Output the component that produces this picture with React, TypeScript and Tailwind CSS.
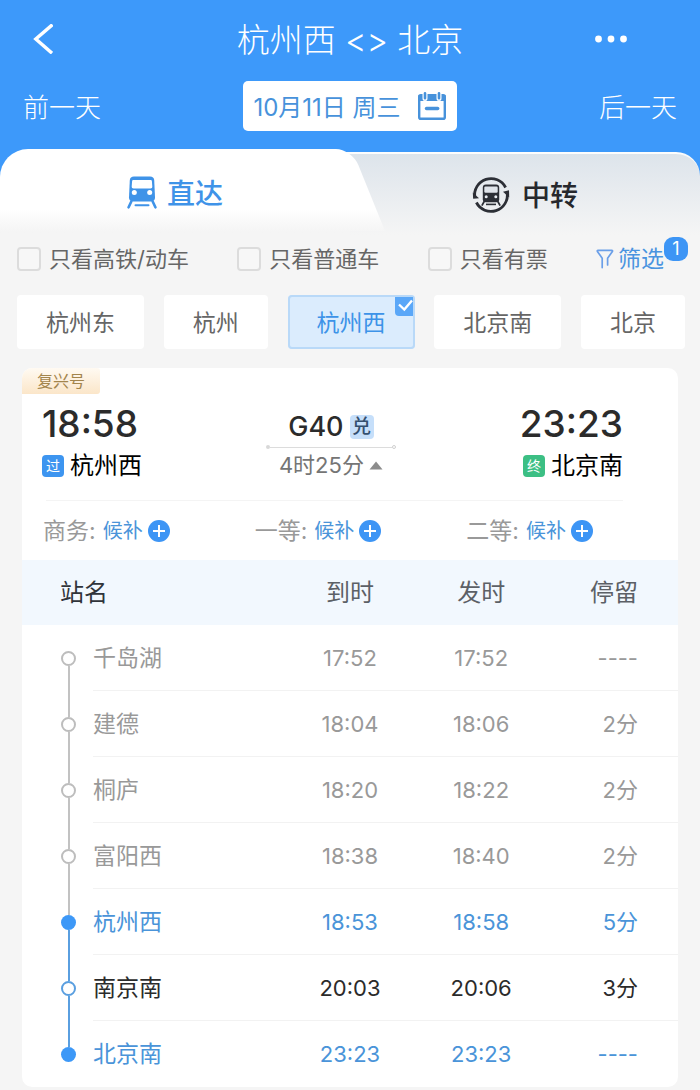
import { useState } from "react";

type Stop = {
  name: string;
  arrive: string;
  depart: string;
  stay: string;
  state: "past" | "active" | "next";
};

const stops: Stop[] = [
  { name: "千岛湖", arrive: "17:52", depart: "17:52", stay: "----", state: "past" },
  { name: "建德", arrive: "18:04", depart: "18:06", stay: "2分", state: "past" },
  { name: "桐庐", arrive: "18:20", depart: "18:22", stay: "2分", state: "past" },
  { name: "富阳西", arrive: "18:38", depart: "18:40", stay: "2分", state: "past" },
  { name: "杭州西", arrive: "18:53", depart: "18:58", stay: "5分", state: "active" },
  { name: "南京南", arrive: "20:03", depart: "20:06", stay: "3分", state: "next" },
  { name: "北京南", arrive: "23:23", depart: "23:23", stay: "----", state: "active" },
];

const rowText = {
  past: "text-[#999999]",
  active: "text-[#4a94d9]",
  next: "text-[#2b2b2b]",
};

const dotStyle = {
  past: "border-2 border-[#bdbdbd] bg-white",
  active: "bg-[#3d98f7]",
  next: "border-2 border-[#5a9fe0] bg-white",
};

const filters = ["只看高铁/动车", "只看普通车", "只看有票"];
const stations = ["杭州东", "杭州", "杭州西", "北京南", "北京"];
const seats = ["商务", "一等", "二等"];

function BackIcon() {
  return (
    <svg width="20" height="30" viewBox="0 0 20 30" fill="none" stroke="#fff" strokeWidth="3.4" aria-hidden="true">
      <path d="M19.5 0.600 L2.8 15 L19 29.200" />
    </svg>
  );
}

function MoreIcon() {
  return (
    <svg width="34" height="10" viewBox="0 0 34 10" fill="#fff" aria-hidden="true">
      <circle cx="4.5" cy="5" r="3.4" />
      <circle cx="17" cy="5" r="3.4" />
      <circle cx="29.5" cy="5" r="3.4" />
    </svg>
  );
}

function CalendarIcon() {
  return (
    <svg width="30" height="30" viewBox="0 0 30 30" fill="none" aria-hidden="true">
      <rect x="2.2" y="4.2" width="25.6" height="23.6" rx="1.6" stroke="#4792db" strokeWidth="2.4" />
      <path d="M1.5 4h27v6h-27z" fill="#4792db" />
      <path d="M8 2.4v5.2M22 2.4v5.2" stroke="#fff" strokeWidth="5" strokeLinecap="round" />
      <path d="M8 2.2v5M22 2.2v5" stroke="#4792db" strokeWidth="2.6" strokeLinecap="round" />
      <path d="M9.5 17.5h11.200" stroke="#4792db" strokeWidth="3.4" strokeLinecap="round" />
    </svg>
  );
}

function TrainIcon() {
  return (
    <svg width="30" height="34" viewBox="0 0 30 34" fill="none" aria-hidden="true">
      <path
        d="M7 1.5h16c2.6 0 4 1.3 4.2 3.6l.8 17.2c.1 2.6-1.200 4.200-3.800 4.200H5.800C3.200 26.500 1.900 24.900 2 22.300L2.800 5.100C3 2.800 4.400 1.500 7 1.500z"
        fill="#3f93e8"
      />
      <path d="M6.500 5h17c.9 0 1.300.4 1.400 1.300l.4 5.200c.1 1.300-.6 2-1.900 2H6.600c-1.300 0-2-.7-1.900-2l.4-5.200C5.200 5.400 5.600 5 6.500 5z" fill="#fff" />
      <circle cx="7.300" cy="17.500" r="2.500" fill="#fff" />
      <circle cx="22.700" cy="17.500" r="2.500" fill="#fff" />
      <path d="M4.300 26.500 L1.600 32.300 M25.700 26.500 L28.400 32.300" stroke="#3f93e8" strokeWidth="2.600" strokeLinecap="round" />
      <path d="M8.500 30.300h13" stroke="#3f93e8" strokeWidth="2" strokeLinecap="round" />
    </svg>
  );
}

function TransferIcon() {
  return (
    <svg width="38" height="38" viewBox="0 0 38 38" fill="none" aria-hidden="true">
      <path d="M2.800 21.500 A16.400 16.400 0 0 1 33.600 11.500" stroke="#2c2f36" strokeWidth="2.800" />
      <path d="M4.400 26.500 A16.400 16.400 0 0 0 35.200 16.500" stroke="#2c2f36" strokeWidth="2.800" />
      <path d="M.8 16.500 L7 22.300 L1.200 22.800z" fill="#2c2f36" />
      <path d="M37.200 21.500 L31 15.700 L37 14.200z" fill="#2c2f36" />
      <rect x="10.800" y="8.600" width="16.400" height="17.600" rx="3" fill="#2c2f36" />
      <rect x="12.300" y="10.600" width="13.400" height="6.200" rx="1.200" fill="#dfe4ea" />
      <circle cx="14.200" cy="20.800" r="1.500" fill="#e9edf2" />
      <circle cx="23.800" cy="20.800" r="1.500" fill="#e9edf2" />
      <path d="M12.200 25.500 L10.200 29 M25.800 25.500 L27.800 29" stroke="#2c2f36" strokeWidth="1.700" strokeLinecap="round" />
      <path d="M14 28.400h10" stroke="#2c2f36" strokeWidth="1.600" />
    </svg>
  );
}

function FunnelIcon() {
  return (
    <svg width="18" height="20" viewBox="0 0 18 20" fill="none" stroke="#6b9fe8" strokeWidth="1.700" strokeLinejoin="round" strokeLinecap="round" aria-hidden="true">
      <path d="M6.200 18.600 V9.200 L1.400 2.400 C1.100 1.800 1.300 1.300 2 1.300 H15.800 C16.500 1.300 16.700 1.800 16.400 2.400 L11.600 9.200 V16" />
    </svg>
  );
}

function PlusIcon() {
  return (
    <svg width="22" height="22" viewBox="0 0 22 22" aria-hidden="true">
      <circle cx="11" cy="11" r="11" fill="#3d95f5" />
      <path d="M11 5v12M5 11h12" stroke="#fff" strokeWidth="2" />
    </svg>
  );
}

export default function App() {
  const [station, setStation] = useState("杭州西");

  return (
    <div className="min-h-screen bg-[#f5f5f5] pb-[3px] font-['Inter','Noto_Sans_CJK_SC',sans-serif] text-[#2b2b2b]">
      <header className="bg-[#3d99fa] text-white">
        <div className="grid h-[78px] grid-cols-[110px_1fr_110px] items-center">
          <button type="button" aria-label="返回" className="justify-self-start pl-[33px]">
            <BackIcon />
          </button>
          <h1 className="pt-[2px] text-center text-[33px] leading-10 font-light">杭州西 &lt;&gt; 北京</h1>
          <button type="button" aria-label="更多" className="justify-self-start pl-1">
            <MoreIcon />
          </button>
        </div>
        <div className="grid grid-cols-[1fr_auto_1fr] items-center px-[23px] pt-[3px] pb-[18px]">
          <button type="button" className="justify-self-start pt-[3px] text-[26px] leading-8 font-light">前一天</button>
          <button type="button" className="flex h-[50px] items-center gap-4 rounded-[5px] bg-white px-[10px] text-[24px] leading-8 whitespace-nowrap text-[#4792db]">
            <span className="pt-[3px]">10月11日 周三</span>
            <CalendarIcon />
          </button>
          <button type="button" className="justify-self-end pt-[3px] text-[26px] leading-8 font-light">后一天</button>
        </div>
      </header>

      <div className="bg-linear-to-b from-[#3d99fa] from-40% to-[#f5f5f5] to-40%">
        <div role="tablist" className="isolate grid h-[86px] grid-cols-2">
          <button
            type="button"
            role="tab"
            aria-selected="true"
            className="relative z-10 flex items-center justify-center gap-[10px] rounded-tl-[28px] rounded-tr-[24px] bg-linear-to-b from-white from-[60px] to-[#f5f5f5] to-[82px] text-[28px] leading-9 font-medium text-[#3f93e8] after:absolute after:top-0 after:right-[-35px] after:-z-10 after:h-[82px] after:w-[90px] after:skew-x-[22deg] after:origin-bottom-right after:rounded-tr-[16px] after:bg-linear-to-b after:from-white after:from-[60px] after:to-[#f5f5f5] after:to-[82px]"
          >
            <TrainIcon />
            <span className="pt-[3px]">直达</span>
          </button>
          <div className="-ml-16 flex pt-[3px]">
            <button
              type="button"
              role="tab"
              aria-selected="false"
              className="flex flex-1 items-center justify-center gap-3 rounded-tr-[24px] border-t-2 border-white/80 bg-linear-to-b from-[#dde4eb] to-[#f5f5f5] pl-16 text-[28px] leading-9 font-medium text-[#26282d]"
            >
              <TransferIcon />
              <span className="pt-[2px]">中转</span>
            </button>
          </div>
        </div>
      </div>

      <form className="flex items-center justify-between pt-[6px] pr-[36px] pl-[17px]">
        {filters.map((label) => (
          <label key={label} className="flex items-center gap-2 text-[22px] leading-9 whitespace-nowrap text-[#666666]">
            <input type="checkbox" className="size-6 appearance-none rounded-[4px] border-2 border-[#dcdcdc] bg-[#f7f7f7] checked:bg-[#3d99fa]" />
            {label}
          </label>
        ))}
        <button type="button" className="relative flex items-center gap-1 text-[23px] leading-9 text-[#4a94e0]">
          <FunnelIcon />
          筛选
          <span className="absolute -top-1 left-full flex size-6 items-center justify-center rounded-[9px] bg-[#3d95f5] text-[18px] leading-6 text-white">
            1
          </span>
        </button>
      </form>

      <div className="flex justify-between pt-[18px] pr-[15px] pl-[17px]">
        {stations.map((name) => (
          <button
            key={name}
            type="button"
            aria-pressed={name === station}
            onClick={() => setStation(name)}
            className={
              name === station
                ? "relative h-[54px] rounded-[4px] bg-[#dbecfd] px-[29px] pt-[3px] text-[23px] text-[#3d93e8] inset-ring-2 inset-ring-[#b9d9f8]"
                : "relative h-[54px] rounded-[4px] bg-white px-[29px] pt-[3px] text-[23px] text-[#666666]"
            }
          >
            {name}
            {name === station && (
              <svg className="absolute top-[2px] right-[2px]" width="18" height="19" viewBox="0 0 18 19" aria-hidden="true">
                <path d="M0 0h18v19H4a4 4 0 0 1-4-4z" fill="#5aa7f8" />
                <path d="M4 7.500 L9.300 12.500 L17 3.500" fill="none" stroke="#fff" strokeWidth="2.400" />
              </svg>
            )}
          </button>
        ))}
      </div>

      <main className="mt-[19px] mr-[22px] ml-[22px] overflow-hidden rounded-[10px] bg-white">
        <span className="block h-[26px] w-[78px] rounded-r-[3px] bg-linear-to-b from-[#fffaf2] to-[#fbe6c9] text-center text-[16px] leading-[26px] text-[#a3854c]">
          复兴号
        </span>

        <section className="flex h-[106px] justify-between pt-[10px] pr-[55px] pl-5">
          <div>
            <div className="text-[37px] leading-10 font-medium">18:58</div>
            <div className="mt-1 flex items-center gap-[6px] text-[24px] leading-9 text-black">
              <span className="flex size-[22px] items-center justify-center rounded-[4px] bg-[#3d95f0] text-[14px] leading-5 text-white">过</span>
              杭州西
            </div>
          </div>
          <div className="flex flex-col items-center">
            <div className="mt-[5px] flex items-center gap-[6px] text-[27px] leading-9 font-medium">
              G40
              <span className="flex size-6 items-center justify-center rounded-[4px] bg-[#c6dffa] text-[19px] leading-6 text-[#34506f]">兑</span>
            </div>
            <div className="flex w-[130px] items-center">
              <span className="size-1 rounded-full bg-[#d8d8d8]" />
              <span className="h-px flex-1 bg-[#dcdcdc]" />
              <span className="size-1 rounded-full border border-[#d0d0d0]" />
            </div>
            <button type="button" className="flex items-center gap-[5px] text-[22px] leading-8 text-[#757575]">
              4时25分
              <svg width="14" height="9" viewBox="0 0 14 9" aria-hidden="true">
                <path d="M7 0.500 L13.500 8.500 H.5z" fill="#8c8c8c" />
              </svg>
            </button>
          </div>
          <div className="text-right">
            <div className="text-[37px] leading-10 font-medium">23:23</div>
            <div className="mt-1 flex items-center justify-end gap-[6px] text-[24px] leading-9 text-black">
              <span className="flex size-[22px] items-center justify-center rounded-[4px] bg-[#3cbf84] text-[14px] leading-5 text-white">终</span>
              北京南
            </div>
          </div>
        </section>

        <section className="mr-[55px] ml-6 border-t border-[#f4f4f4]" />
        <section className="grid h-[59px] grid-cols-3 items-center pl-[21px]">
          {seats.map((seat) => (
            <div key={seat} className="flex items-center gap-[7px] whitespace-nowrap">
              <span className="text-[23px] leading-8 text-[#999999]">{seat}:</span>
              <button type="button" className="flex items-center gap-[5px] text-[20px] leading-8 text-[#4a94d9]">
                候补
                <PlusIcon />
              </button>
            </div>
          ))}
        </section>

        <table className="w-full table-fixed border-separate border-spacing-0">
          <thead className="bg-[#f2f8fe] text-[24px] leading-8 text-[#5c6066]">
            <tr className="h-[65px]">
              <th scope="col" className="w-[40%] pl-[38px] text-left font-normal text-[#30343a]">站名</th>
              <th scope="col" className="w-[20%] text-center font-normal">到时</th>
              <th scope="col" className="w-[20%] text-center font-normal">发时</th>
              <th scope="col" className="w-[20%] pr-10 text-right font-normal">停留</th>
            </tr>
          </thead>
          <tbody>
            {stops.map((stop, i) => {
              const last = i === stops.length - 1;
              const line = last ? "" : "border-b border-[#f2f2f2]";
              const above = i === 0 ? "bg-transparent" : i > 4 ? "bg-[#5a9fe0]" : "bg-[#c2c2c2]";
              const below = last ? "bg-transparent" : i >= 4 ? "bg-[#5a9fe0]" : "bg-[#c2c2c2]";
              return (
                <tr key={stop.name} className={`${rowText[stop.state]} text-[22px] leading-8`}>
                  <td className="p-0">
                    <div className="flex h-[66px] pl-[39px]">
                      <span className="flex w-[15px] flex-col items-center">
                        <span className={`w-[2px] flex-1 ${above}`} />
                        <span className={`size-[15px] rounded-full ${dotStyle[stop.state]}`} />
                        <span className={`w-[2px] flex-1 ${below}`} />
                      </span>
                      <span className={`ml-[17px] flex flex-1 items-center text-[23px] ${line}`}>{stop.name}</span>
                    </div>
                  </td>
                  <td className={`p-0 text-center ${line}`}>{stop.arrive}</td>
                  <td className={`p-0 text-center ${line}`}>{stop.depart}</td>
                  <td className={`p-0 pr-10 text-right ${line}`}>{stop.stay}</td>
                </tr>
              );
            })}
          </tbody>
        </table>
      </main>
    </div>
  );
}
